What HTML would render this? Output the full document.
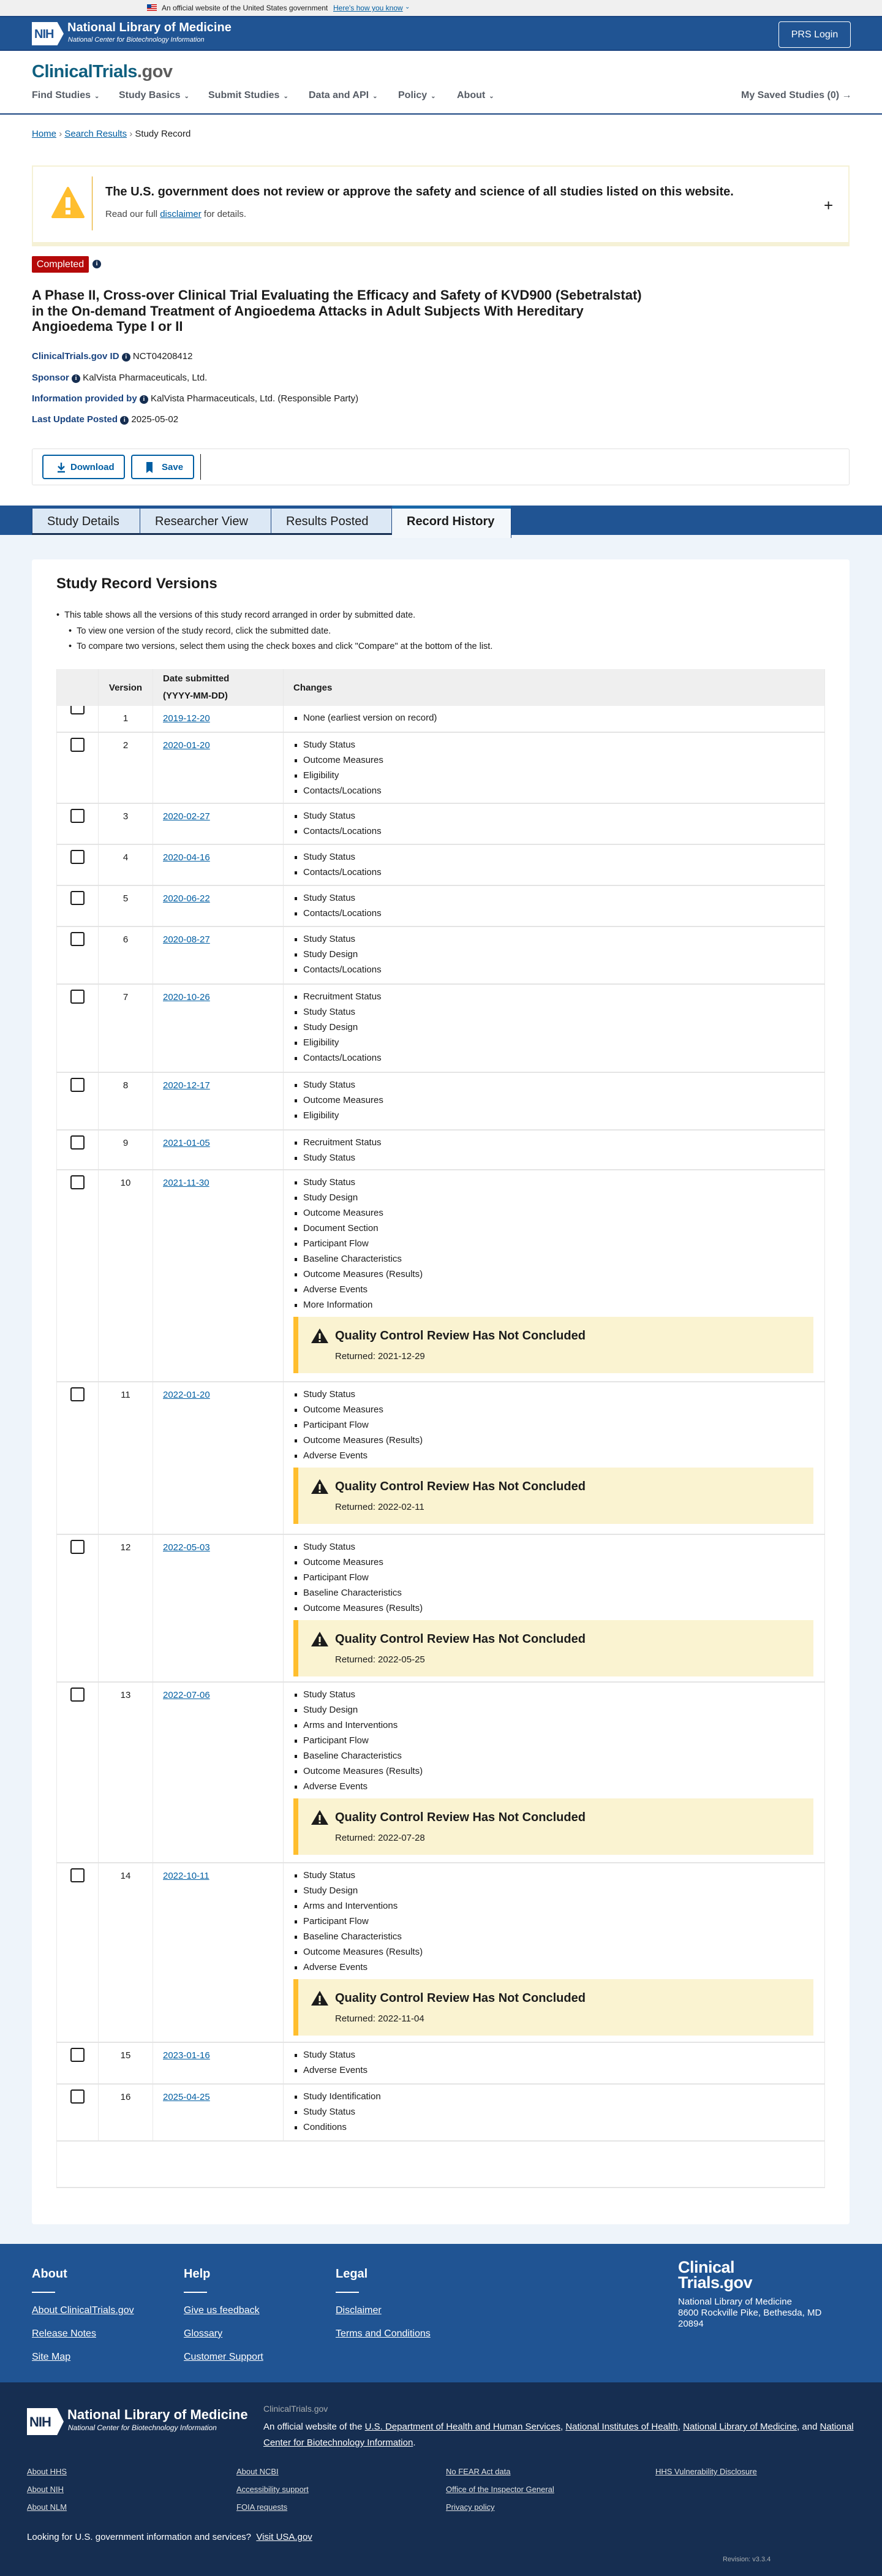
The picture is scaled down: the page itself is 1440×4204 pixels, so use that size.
<!DOCTYPE html>
<html><head><meta charset="utf-8">
<style>
*{box-sizing:border-box;margin:0;padding:0}
body{width:1440px;height:4204px;position:relative;font-family:"Liberation Sans",Arial,sans-serif;color:#1b1b1b;background:#fff;overflow:hidden}
a{color:#005ea2}
.abs{position:absolute}
.banner{left:0;top:0;width:1440px;height:26px;background:#f0f0f0;font-size:12px;color:#1b1b1b}
.nih{left:0;top:26px;width:1440px;height:57px;background:#205493;border-top:2px solid #1a4480;border-bottom:2px solid #1a4480}
.nav a{color:#565c65;font-weight:bold;text-decoration:none;font-size:16px;position:absolute;top:147px}
.car{font-size:10px;margin-left:6px}
.info{display:inline-block;width:14px;height:14px;border-radius:50%;background:#162e51;color:#fff;font-size:10px;font-weight:bold;text-align:center;line-height:14px;vertical-align:1px;font-family:"Liberation Serif",serif}
.meta{left:52px;font-size:15px}
.meta b{color:#1a4480;font-weight:bold}
.tabs{left:0;top:825px;width:1440px;height:48px;background:#205493}
.tab{position:absolute;top:5px;height:43px;background:#dce8f5;border-right:1px solid #1a4480;border-bottom:3px solid #162e51;font-size:20px;color:#1b1b1b;padding:10px 0 0 24px}
.maintop{left:0;top:873px;width:1440px;height:2789px;background:#eef4fa}
.card{left:52px;top:913px;width:1335px;height:2717px;background:#fff;border-radius:4px}
table{border-collapse:collapse;position:absolute;left:92px;top:1092px;width:1255px;font-size:15px}
td,th{vertical-align:top;border-left:1px solid #e8e8e8;border-right:1px solid #e8e8e8}
th{background:#efefef;text-align:left;font-weight:bold;font-size:15px;height:60px;vertical-align:middle;padding:0 16px}
tr.r td{border-bottom:2px solid #e4e4e4}
td.cb{width:68px;padding:8px 0 0 22px}
td.cb span{display:block;width:23px;height:23px;border:2px solid #1b1b1b;border-radius:3px}
td.v{width:89px;text-align:center;padding-top:8px;line-height:25px}
td.d{width:213px;padding:8px 16px 0;line-height:25px}
td.d a{text-decoration:underline}
td.c{padding:7px 18px 4px 16px}
td.c ul{list-style:none}
td.c li{line-height:25px;padding-left:16px;position:relative}
td.c li:before{content:"";position:absolute;left:2px;top:11px;width:4px;height:5px;background:#1b1b1b}
.qc{margin-top:7px;height:92px;background:#faf3d1;border-left:8px solid #ffbe2e;padding:18px 0 0 20px}
.qc .t{font-size:20px;font-weight:bold;display:flex;align-items:center}
.qc .t svg{margin-right:10px}
.qc .s{font-size:15px;margin:12px 0 0 40px}
.f1{left:0;top:3662px;width:1440px;height:226px;background:#205493;color:#fff}
.f2{left:0;top:3888px;width:1440px;height:316px;background:#162e51;color:#fff}
.fh{position:absolute;top:38px;font-size:20px;font-weight:bold}
.fh:after{content:"";position:absolute;left:0;top:40px;width:38px;height:2px;background:#fff}
.fl{position:absolute;font-size:16px;color:#fff;text-decoration:underline}
.sl{position:absolute;font-size:13px;color:#dfe1e2;text-decoration:underline}
</style></head><body>

<div class="abs banner"><div class="abs" style="left:240px;top:7px;width:16px;height:11px;background:repeating-linear-gradient(#c00 0 1.5px,#fff 1.5px 3px)"><div style="width:7px;height:6px;background:#0b4a9e"></div></div>
<span class="abs" style="left:264px;top:6px">An official website of the United States government</span>
<a class="abs" style="left:544px;top:6px;text-decoration:underline">Here's how you know</a><span class="abs" style="left:661px;top:6px;color:#005ea2;font-size:10px">&#8964;</span></div>

<div class="abs nih">
 <div class="abs" style="left:52px;top:8px;width:52px;height:38px;background:#fff;clip-path:polygon(0 0,80% 0,100% 50%,80% 100%,0 100%)"></div>
 <span class="abs" style="left:56px;top:17px;font-size:20px;color:#205493;font-weight:bold;letter-spacing:-1px">NIH</span>
 <span class="abs" style="left:110px;top:6px;font-size:20px;color:#fff;font-weight:bold">National Library of Medicine</span>
 <span class="abs" style="left:111px;top:31px;font-size:11px;color:#fff;font-style:italic">National Center for Biotechnology Information</span>
 <div class="abs" style="left:1271px;top:7px;width:118px;height:43px;border:1px solid #fff;border-radius:4px;color:#fff;font-size:16px;text-align:center;line-height:41px">PRS Login</div>
</div>

<div class="abs" style="left:52px;top:101px;font-size:29px;font-weight:bold;color:#0f5f7f;letter-spacing:-0.5px">ClinicalTrials<span style="color:#5c5c5c">.gov</span></div>
<div class="nav">
 <a style="left:52px">Find Studies<span class="car">&#8964;</span></a>
 <a style="left:194px">Study Basics<span class="car">&#8964;</span></a>
 <a style="left:340px">Submit Studies<span class="car">&#8964;</span></a>
 <a style="left:504px">Data and API<span class="car">&#8964;</span></a>
 <a style="left:650px">Policy<span class="car">&#8964;</span></a>
 <a style="left:746px">About<span class="car">&#8964;</span></a>
 <a style="left:1210px">My Saved Studies (0) &#8594;</a>
</div>
<div class="abs" style="left:0;top:185px;width:1440px;height:2px;background:#1a4480"></div>

<div class="abs" style="left:52px;top:210px;font-size:15px"><a style="text-decoration:underline">Home</a> <span style="color:#777">›</span> <a style="text-decoration:underline">Search Results</a> <span style="color:#777">›</span> Study Record</div>

<div class="abs" style="left:52px;top:270px;width:1335px;height:132px;border:2px solid #f5f1d6;border-bottom:7px solid #f5f1d6;background:#fff">
 <svg class="abs" style="left:30px;top:32px" width="54" height="54" viewBox="0 0 54 54"><path d="M27 3 L52 50 L2 50 Z" fill="#ffbe2e" stroke="#ffbe2e" stroke-width="4" stroke-linejoin="round"/><rect x="23" y="18" width="8" height="17" fill="#fff"/><rect x="23" y="39" width="8" height="7" fill="#fff"/></svg>
 <div class="abs" style="left:96px;top:16px;width:1px;height:88px;background:#e5a000"></div>
 <div class="abs" style="left:118px;top:30px;font-size:20px;font-weight:bold">The U.S. government does not review or approve the safety and science of all studies listed on this website.</div>
 <div class="abs" style="left:118px;top:69px;font-size:15px;color:#454545">Read our full <a style="text-decoration:underline">disclaimer</a> for details.</div>
 <div class="abs" style="left:1291px;top:48px;font-size:26px">+</div>
</div>

<div class="abs" style="left:52px;top:418px;width:93px;height:27px;background:#b50909;color:#fff;font-size:16px;text-align:center;line-height:27px;border-radius:2px">Completed</div>
<span class="abs info" style="left:151px;top:424px">i</span>

<div class="abs" style="left:52px;top:469px;width:1000px;font-size:22px;font-weight:bold;line-height:25.5px">A Phase II, Cross-over Clinical Trial Evaluating the Efficacy and Safety of KVD900 (Sebetralstat) in the On-demand Treatment of Angioedema Attacks in Adult Subjects With Hereditary Angioedema Type I or II</div>

<div class="abs meta" style="top:573px"><b>ClinicalTrials.gov ID</b> <span class="info">i</span> NCT04208412</div>
<div class="abs meta" style="top:608px"><b>Sponsor</b> <span class="info">i</span> KalVista Pharmaceuticals, Ltd.</div>
<div class="abs meta" style="top:642px"><b>Information provided by</b> <span class="info">i</span> KalVista Pharmaceuticals, Ltd. (Responsible Party)</div>
<div class="abs meta" style="top:676px"><b>Last Update Posted</b> <span class="info">i</span> 2025-05-02</div>

<div class="abs" style="left:52px;top:732px;width:1335px;height:60px;border:1px solid #e0e0e0;border-radius:3px">
 <div class="abs" style="left:16px;top:9px;width:135px;height:40px;border:2px solid #005ea2;border-radius:4px;color:#005ea2;font-size:15px;font-weight:bold;padding:10px 0 0 44px">Download
  <svg class="abs" style="left:22px;top:10px" width="14" height="18" viewBox="0 0 14 18"><path d="M7 1v11M2 7l5 5 5-5M1 16h12" stroke="#005ea2" stroke-width="2.4" fill="none"/></svg></div>
 <div class="abs" style="left:161px;top:9px;width:103px;height:40px;border:2px solid #005ea2;border-radius:4px;color:#005ea2;font-size:15px;font-weight:bold;padding:10px 0 0 48px">Save
  <svg class="abs" style="left:22px;top:9px" width="12" height="20" viewBox="0 0 12 20"><path d="M1 1h10v18l-5-4-5 4z" fill="#005ea2"/></svg></div>
 <div class="abs" style="left:274px;top:8px;width:1px;height:42px;background:#1b1b1b"></div>
</div>

<div class="abs maintop"></div>
<div class="abs tabs">
 <div class="tab" style="left:52px;width:177px;border-left:1px solid #1a4480">Study Details</div>
 <div class="tab" style="left:229px;width:214px">Researcher View</div>
 <div class="tab" style="left:443px;width:197px">Results Posted</div>
 <div class="tab" style="left:640px;width:195px;top:0;height:53px;background:#f3f7fb;border-top:5px solid #1a67a8;border-bottom:none;font-weight:bold;padding-top:10px">Record History</div>
</div>

<div class="abs card"></div>
<div class="abs" style="left:92px;top:939px;font-size:24px;font-weight:bold">Study Record Versions</div>
<div class="abs" style="left:92px;top:992px;font-size:14.5px;line-height:25.5px">
 <div>• &nbsp;This table shows all the versions of this study record arranged in order by submitted date.</div>
 <div style="padding-left:20px">• &nbsp;To view one version of the study record, click the submitted date.</div>
 <div style="padding-left:20px">• &nbsp;To compare two versions, select them using the check boxes and click "Compare" at the bottom of the list.</div>
</div>

<table>
<tr><th style="width:68px"></th><th style="width:89px;text-align:center;padding:0">Version</th><th style="width:213px;line-height:28px">Date submitted<br>(YYYY-MM-DD)</th><th>Changes</th></tr>
<tr class="r" style="height:43px"><td class="cb" style="padding-top:0"><span style="height:14px;border-top:none;border-radius:0 0 3px 3px"></span></td><td class="v" style="padding-top:8px">1</td><td class="d"><a>2019-12-20</a></td><td class="c"><ul><li>None (earliest version on record)</li></ul></td></tr>
<tr class="r" style="height:116px"><td class="cb"><span></span></td><td class="v">2</td><td class="d"><a>2020-01-20</a></td><td class="c"><ul><li>Study Status</li><li>Outcome Measures</li><li>Eligibility</li><li>Contacts/Locations</li></ul></td></tr>
<tr class="r" style="height:67px"><td class="cb"><span></span></td><td class="v">3</td><td class="d"><a>2020-02-27</a></td><td class="c"><ul><li>Study Status</li><li>Contacts/Locations</li></ul></td></tr>
<tr class="r" style="height:67px"><td class="cb"><span></span></td><td class="v">4</td><td class="d"><a>2020-04-16</a></td><td class="c"><ul><li>Study Status</li><li>Contacts/Locations</li></ul></td></tr>
<tr class="r" style="height:67px"><td class="cb"><span></span></td><td class="v">5</td><td class="d"><a>2020-06-22</a></td><td class="c"><ul><li>Study Status</li><li>Contacts/Locations</li></ul></td></tr>
<tr class="r" style="height:94px"><td class="cb"><span></span></td><td class="v">6</td><td class="d"><a>2020-08-27</a></td><td class="c"><ul><li>Study Status</li><li>Study Design</li><li>Contacts/Locations</li></ul></td></tr>
<tr class="r" style="height:144px"><td class="cb"><span></span></td><td class="v">7</td><td class="d"><a>2020-10-26</a></td><td class="c"><ul><li>Recruitment Status</li><li>Study Status</li><li>Study Design</li><li>Eligibility</li><li>Contacts/Locations</li></ul></td></tr>
<tr class="r" style="height:94px"><td class="cb"><span></span></td><td class="v">8</td><td class="d"><a>2020-12-17</a></td><td class="c"><ul><li>Study Status</li><li>Outcome Measures</li><li>Eligibility</li></ul></td></tr>
<tr class="r" style="height:65px"><td class="cb"><span></span></td><td class="v">9</td><td class="d"><a>2021-01-05</a></td><td class="c"><ul><li>Recruitment Status</li><li>Study Status</li></ul></td></tr>
<tr class="r" style="height:346px"><td class="cb"><span></span></td><td class="v">10</td><td class="d"><a>2021-11-30</a></td><td class="c"><ul><li>Study Status</li><li>Study Design</li><li>Outcome Measures</li><li>Document Section</li><li>Participant Flow</li><li>Baseline Characteristics</li><li>Outcome Measures (Results)</li><li>Adverse Events</li><li>More Information</li></ul>
<div class="qc"><div class="t"><svg width="30" height="26" viewBox="0 0 30 26"><path d="M15 1 L29 25 L1 25 Z" fill="#1b1b1b"/><rect x="13.5" y="9" width="3" height="9" fill="#faf3d1"/><rect x="13.5" y="20" width="3" height="3" fill="#faf3d1"/></svg>Quality Control Review Has Not Concluded</div><div class="s">Returned: 2021-12-29</div></div></td></tr>
<tr class="r" style="height:249px"><td class="cb"><span></span></td><td class="v">11</td><td class="d"><a>2022-01-20</a></td><td class="c"><ul><li>Study Status</li><li>Outcome Measures</li><li>Participant Flow</li><li>Outcome Measures (Results)</li><li>Adverse Events</li></ul>
<div class="qc"><div class="t"><svg width="30" height="26" viewBox="0 0 30 26"><path d="M15 1 L29 25 L1 25 Z" fill="#1b1b1b"/><rect x="13.5" y="9" width="3" height="9" fill="#faf3d1"/><rect x="13.5" y="20" width="3" height="3" fill="#faf3d1"/></svg>Quality Control Review Has Not Concluded</div><div class="s">Returned: 2022-02-11</div></div></td></tr>
<tr class="r" style="height:241px"><td class="cb"><span></span></td><td class="v">12</td><td class="d"><a>2022-05-03</a></td><td class="c"><ul><li>Study Status</li><li>Outcome Measures</li><li>Participant Flow</li><li>Baseline Characteristics</li><li>Outcome Measures (Results)</li></ul>
<div class="qc"><div class="t"><svg width="30" height="26" viewBox="0 0 30 26"><path d="M15 1 L29 25 L1 25 Z" fill="#1b1b1b"/><rect x="13.5" y="9" width="3" height="9" fill="#faf3d1"/><rect x="13.5" y="20" width="3" height="3" fill="#faf3d1"/></svg>Quality Control Review Has Not Concluded</div><div class="s">Returned: 2022-05-25</div></div></td></tr>
<tr class="r" style="height:295px"><td class="cb"><span></span></td><td class="v">13</td><td class="d"><a>2022-07-06</a></td><td class="c"><ul><li>Study Status</li><li>Study Design</li><li>Arms and Interventions</li><li>Participant Flow</li><li>Baseline Characteristics</li><li>Outcome Measures (Results)</li><li>Adverse Events</li></ul>
<div class="qc"><div class="t"><svg width="30" height="26" viewBox="0 0 30 26"><path d="M15 1 L29 25 L1 25 Z" fill="#1b1b1b"/><rect x="13.5" y="9" width="3" height="9" fill="#faf3d1"/><rect x="13.5" y="20" width="3" height="3" fill="#faf3d1"/></svg>Quality Control Review Has Not Concluded</div><div class="s">Returned: 2022-07-28</div></div></td></tr>
<tr class="r" style="height:293px"><td class="cb"><span></span></td><td class="v">14</td><td class="d"><a>2022-10-11</a></td><td class="c"><ul><li>Study Status</li><li>Study Design</li><li>Arms and Interventions</li><li>Participant Flow</li><li>Baseline Characteristics</li><li>Outcome Measures (Results)</li><li>Adverse Events</li></ul>
<div class="qc"><div class="t"><svg width="30" height="26" viewBox="0 0 30 26"><path d="M15 1 L29 25 L1 25 Z" fill="#1b1b1b"/><rect x="13.5" y="9" width="3" height="9" fill="#faf3d1"/><rect x="13.5" y="20" width="3" height="3" fill="#faf3d1"/></svg>Quality Control Review Has Not Concluded</div><div class="s">Returned: 2022-11-04</div></div></td></tr>
<tr class="r" style="height:68px"><td class="cb"><span></span></td><td class="v">15</td><td class="d"><a>2023-01-16</a></td><td class="c"><ul><li>Study Status</li><li>Adverse Events</li></ul></td></tr>
<tr class="r" style="height:93px"><td class="cb"><span></span></td><td class="v">16</td><td class="d"><a>2025-04-25</a></td><td class="c"><ul><li>Study Identification</li><li>Study Status</li><li>Conditions</li></ul></td></tr>
<tr><td colspan="4" style="height:76px;border-bottom:2px solid #e4e4e4"></td></tr>
</table>

<div class="abs f1">
 <div class="fh" style="left:52px">About</div>
 <div class="fh" style="left:300px">Help</div>
 <div class="fh" style="left:548px">Legal</div>
 <a class="fl" style="left:52px;top:100px">About ClinicalTrials.gov</a>
 <a class="fl" style="left:52px;top:138px">Release Notes</a>
 <a class="fl" style="left:52px;top:176px">Site Map</a>
 <a class="fl" style="left:300px;top:100px">Give us feedback</a>
 <a class="fl" style="left:300px;top:138px">Glossary</a>
 <a class="fl" style="left:300px;top:176px">Customer Support</a>
 <a class="fl" style="left:548px;top:100px">Disclaimer</a>
 <a class="fl" style="left:548px;top:138px">Terms and Conditions</a>
 <div class="abs" style="left:1107px;top:26px;font-size:27px;font-weight:bold;line-height:25px;letter-spacing:-0.5px">Clinical<br>Trials.gov</div>
 <div class="abs" style="left:1107px;top:86px;font-size:15px;line-height:18px">National Library of Medicine<br>8600 Rockville Pike, Bethesda, MD<br>20894</div>
</div>

<div class="abs f2">
 <div class="abs" style="left:44px;top:42px;width:60px;height:44px;background:#fff;clip-path:polygon(0 0,82% 0,100% 50%,82% 100%,0 100%)"></div>
 <span class="abs" style="left:48px;top:52px;font-size:22px;color:#162e51;font-weight:bold;letter-spacing:-1px">NIH</span>
 <span class="abs" style="left:110px;top:40px;font-size:22px;font-weight:bold">National Library of Medicine</span>
 <span class="abs" style="left:111px;top:67px;font-size:12px;font-style:italic">National Center for Biotechnology Information</span>
 <div class="abs" style="left:430px;top:35px;font-size:14px;color:#a9aeb1">ClinicalTrials.gov</div>
 <div class="abs" style="left:430px;top:60px;font-size:15px;line-height:26px;width:980px">An official website of the <u>U.S. Department of Health and Human Services</u>, <u>National Institutes of Health</u>, <u>National Library of Medicine</u>, and <u>National Center for Biotechnology Information</u>.</div>
 <a class="sl" style="left:44px;top:138px">About HHS</a>
 <a class="sl" style="left:44px;top:167px">About NIH</a>
 <a class="sl" style="left:44px;top:196px">About NLM</a>
 <a class="sl" style="left:386px;top:138px">About NCBI</a>
 <a class="sl" style="left:386px;top:167px">Accessibility support</a>
 <a class="sl" style="left:386px;top:196px">FOIA requests</a>
 <a class="sl" style="left:728px;top:138px">No FEAR Act data</a>
 <a class="sl" style="left:728px;top:167px">Office of the Inspector General</a>
 <a class="sl" style="left:728px;top:196px">Privacy policy</a>
 <a class="sl" style="left:1070px;top:138px">HHS Vulnerability Disclosure</a>
 <div class="abs" style="left:44px;top:244px;font-size:15px">Looking for U.S. government information and services? &nbsp;<u>Visit USA.gov</u></div>
 <div class="abs" style="left:1180px;top:283px;font-size:11px;color:#a9aeb1">Revision: v3.3.4</div>
</div>
</body></html>
